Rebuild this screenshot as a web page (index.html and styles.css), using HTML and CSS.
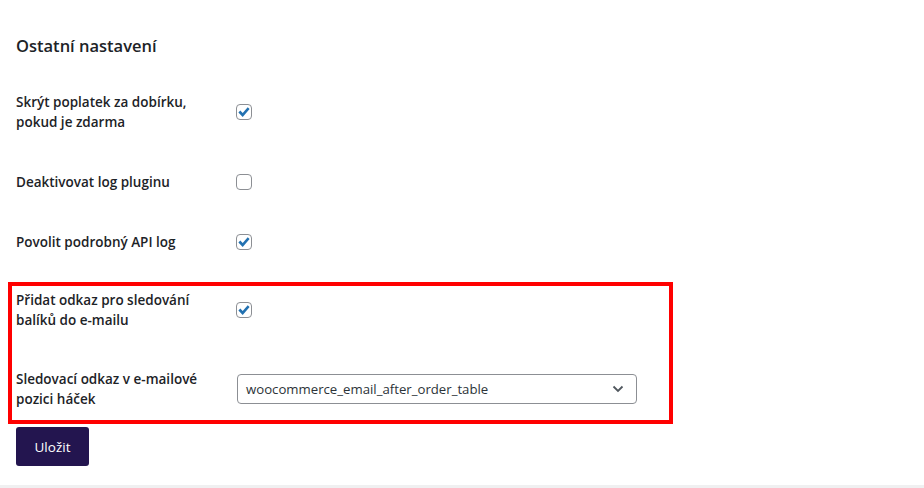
FILE: index.html
```html
<!DOCTYPE html>
<html lang="cs">
<head>
    <meta charset="UTF-8">
    <meta name="viewport" content="width=device-width, initial-scale=1.0">
    <title>Ostatní nastavení</title>
    <link rel="stylesheet" href="styles.css">
</head>
<body>
    <div class="card">
        <h2 class="section-title">Ostatní nastavení</h2>

        <div class="row">
            <label class="row-label">Skrýt poplatek za dobírku, pokud je zdarma</label>
            <div class="row-field">
                <span class="checkbox is-checked">
                    <svg viewBox="0 0 16 16" width="16" height="16"><path d="M2.4 8.4l1.9-1.8 2.4 2.5 5-5.9 1.9 1.7-6.9 8z"/></svg>
                </span>
            </div>
        </div>

        <div class="row">
            <label class="row-label">Deaktivovat log pluginu</label>
            <div class="row-field">
                <span class="checkbox"></span>
            </div>
        </div>

        <div class="row">
            <label class="row-label">Povolit podrobný API log</label>
            <div class="row-field">
                <span class="checkbox is-checked">
                    <svg viewBox="0 0 16 16" width="16" height="16"><path d="M2.4 8.4l1.9-1.8 2.4 2.5 5-5.9 1.9 1.7-6.9 8z"/></svg>
                </span>
            </div>
        </div>

        <div class="highlight">
            <div class="row row-tight">
                <label class="row-label">Přidat odkaz pro sledování balíků do e-mailu</label>
                <div class="row-field">
                    <span class="checkbox is-checked">
                        <svg viewBox="0 0 16 16" width="16" height="16"><path d="M2.4 8.4l1.9-1.8 2.4 2.5 5-5.9 1.9 1.7-6.9 8z"/></svg>
                    </span>
                </div>
            </div>

            <div class="row row-tight">
                <label class="row-label">Sledovací odkaz v <span class="nowrap">e-mailové</span> pozici háček</label>
                <div class="row-field">
                    <div class="select">
                        <span class="select-value">woocommerce_email_after_order_table</span>
                        <svg class="select-arrow" viewBox="0 0 12 8" width="12" height="8"><path d="M1.5 1.5l4.5 4.5 4.5-4.5"/></svg>
                    </div>
                </div>
            </div>
        </div>

        <button class="save-btn">Uložit</button>
    </div>
</body>
</html>
```

FILE: styles.css
```css
body {
    margin: 0;
    background-color: #f0f0f1;
    font-family: "Open Sans", "Noto Sans", Arial, sans-serif;
    color: #1d2327;
}
.card {
    background-color: #fff;
    height: 485px;
    padding: 34px 16px 0;
    box-sizing: border-box;
}
.section-title {
    margin: 0 0 14px;
    font-size: 16.5px;
    line-height: 24px;
    font-weight: 600;
}
.row {
    display: grid;
    grid-template-columns: 220px 1fr;
    align-items: center;
    padding: 20px 0;
}
.row-label {
    font-size: 13.5px;
    font-weight: 600;
    line-height: 20px;
    max-width: 196px;
}
.nowrap {
    white-space: nowrap;
}
.row-field {
    display: flex;
    align-items: center;
}
.checkbox {
    width: 16px;
    height: 16px;
    border: 1px solid #8c8f94;
    border-radius: 4px;
    box-sizing: border-box;
    display: flex;
    align-items: center;
    justify-content: center;
}
.checkbox svg {
    fill: #2271b1;
    flex: none;
}
.highlight {
    width: 665px;
    margin: 10px -8px 0;
    border: 4px solid #ff0000;
    box-sizing: border-box;
    padding: 4px 4px 11px;
    display: flex;
    flex-direction: column;
    gap: 39px;
}
.row-tight {
    padding: 0;
}
.select {
    width: 400px;
    height: 30px;
    margin-left: 1px;
    border: 1px solid #8c8f94;
    border-radius: 4px;
    box-sizing: border-box;
    display: flex;
    align-items: center;
    justify-content: space-between;
    padding: 0 12px 0 8px;
    font-size: 13.2px;
    color: #2c3338;
}
.select-arrow {
    fill: none;
    stroke: #50575e;
    stroke-width: 1.8;
}
.save-btn {
    margin-top: 3px;
    width: 73px;
    height: 39px;
    border: none;
    border-radius: 3px;
    background-color: #23154f;
    color: #fff;
    font-family: inherit;
    font-size: 13.5px;
    font-weight: 500;
    cursor: pointer;
}
```
